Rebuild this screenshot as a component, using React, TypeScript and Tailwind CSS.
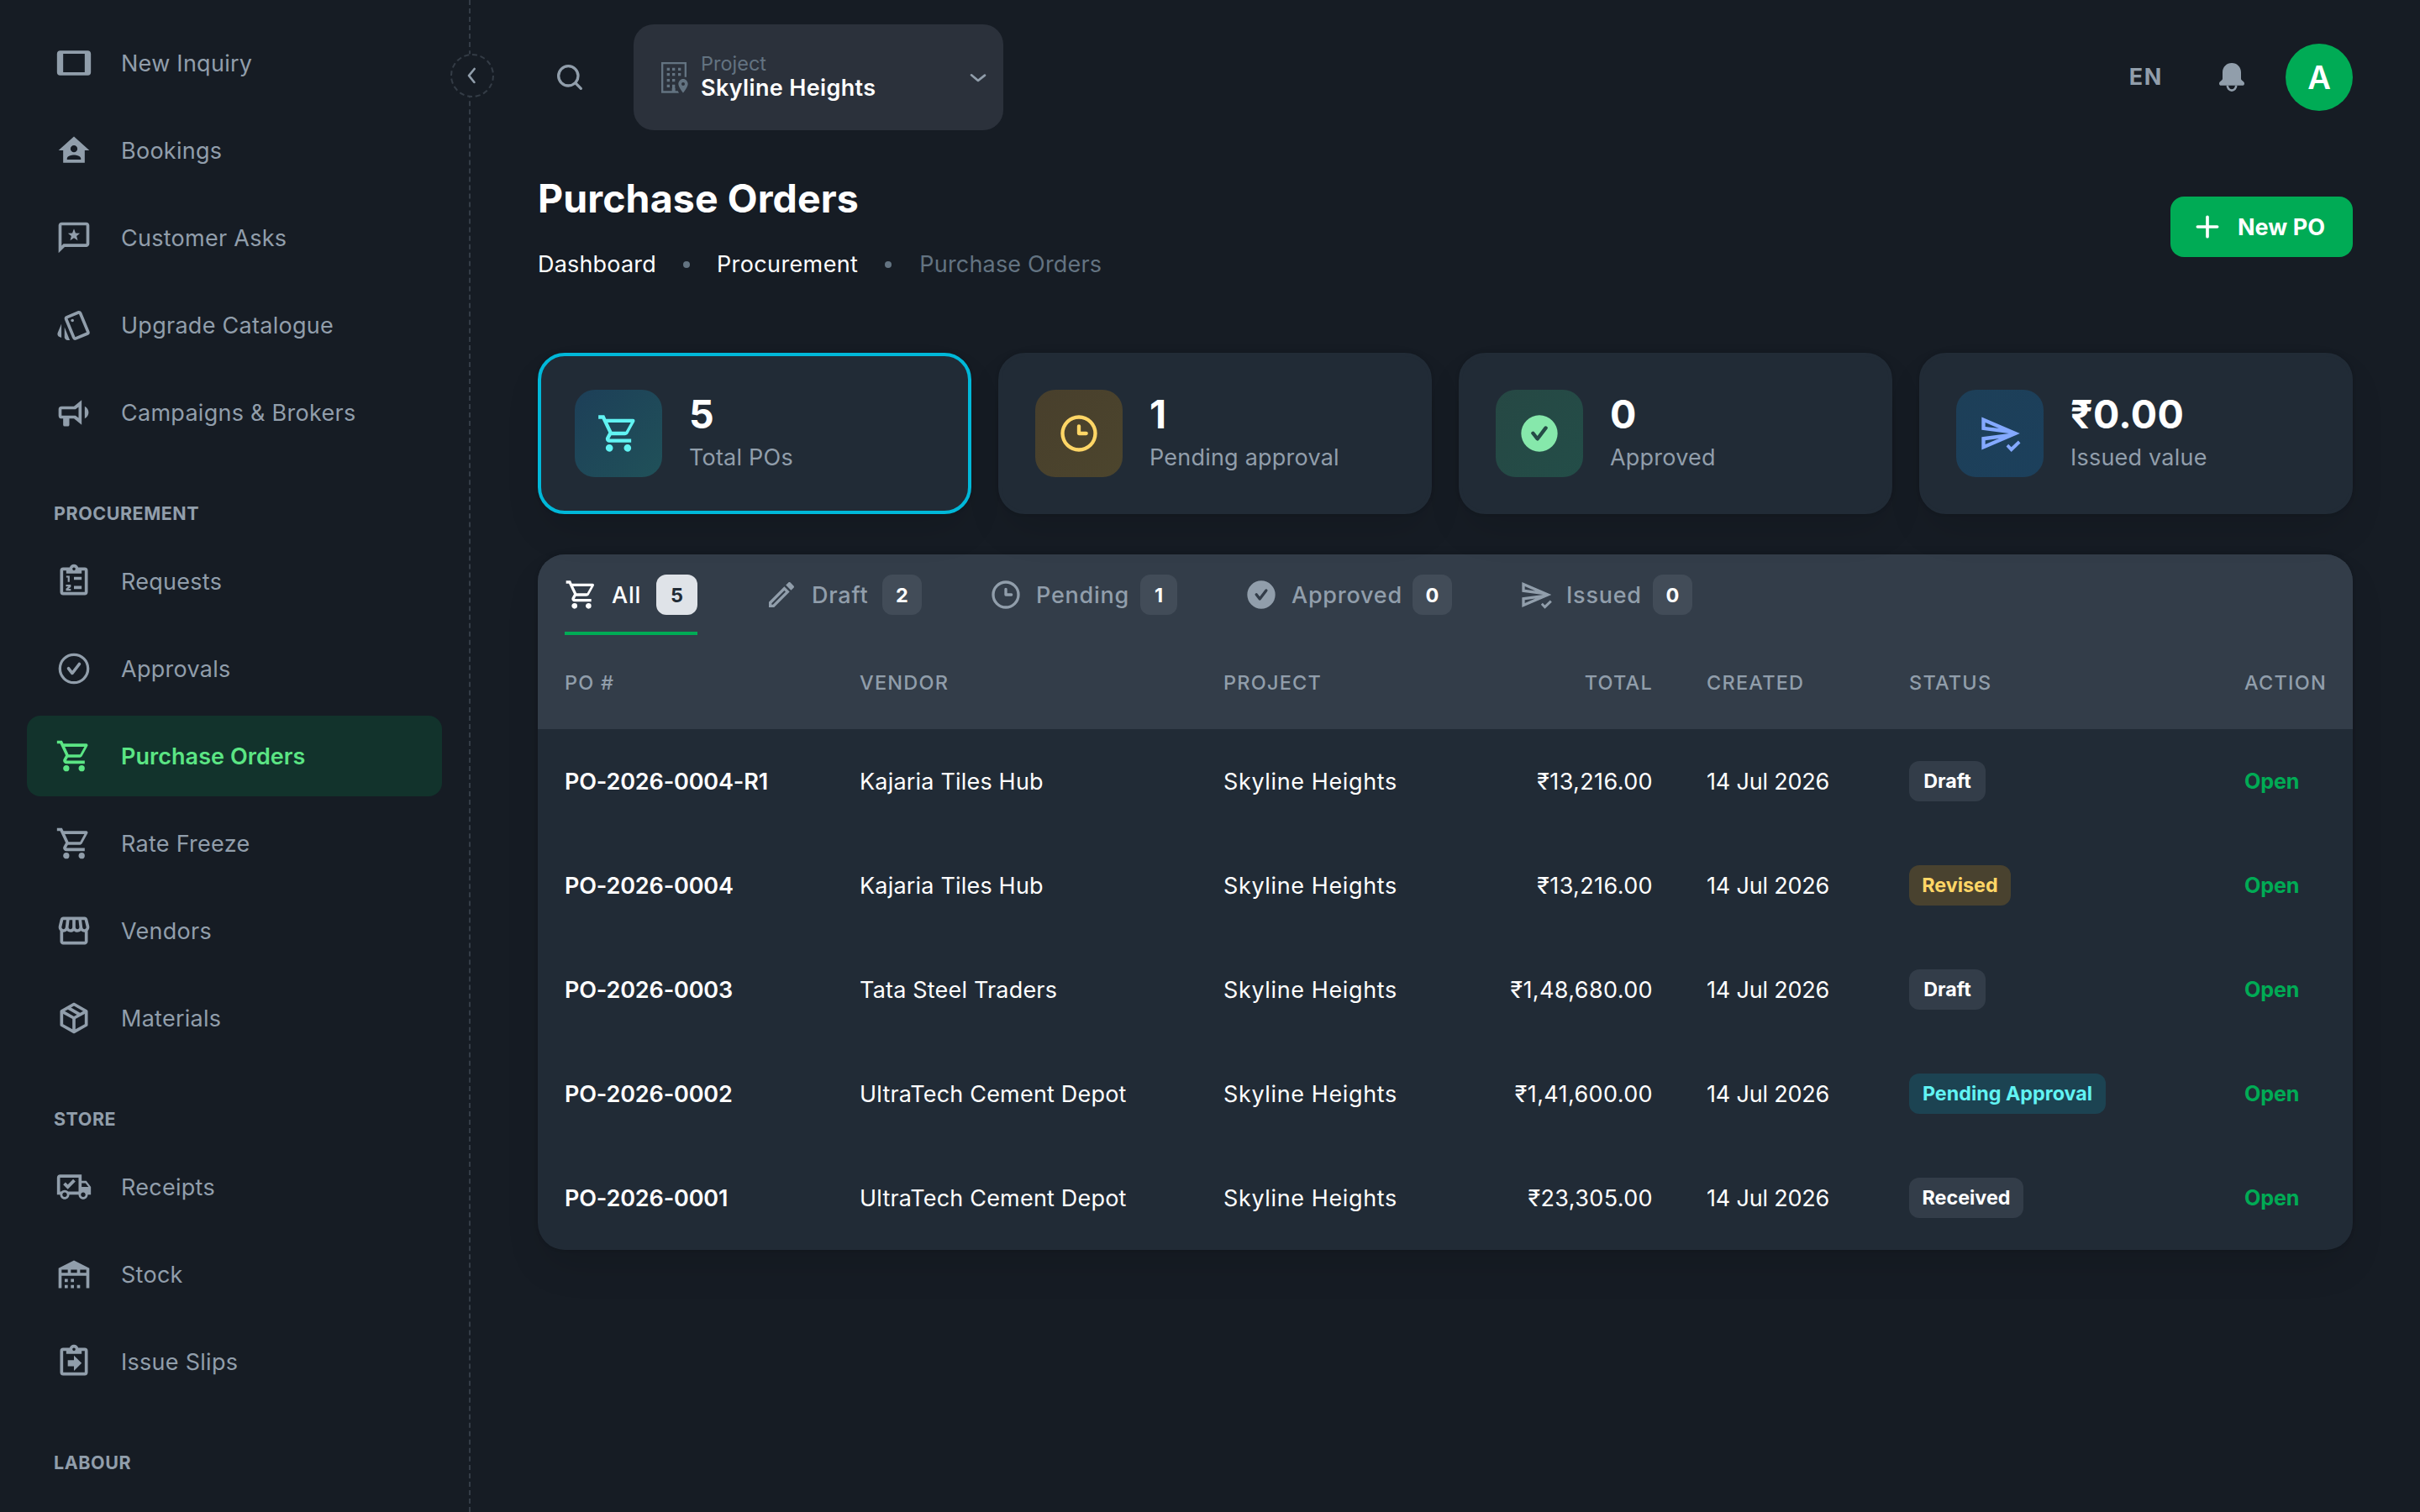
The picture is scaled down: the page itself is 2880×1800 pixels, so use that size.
import type { ReactNode } from "react";
import { MdOutlineStyle, MdOutlineStorefront } from "react-icons/md";

function Icon({ className = "", children }: { className?: string; children: ReactNode }) {
  return (
    <svg viewBox="0 0 24 24" fill="currentColor" aria-hidden="true" className={`shrink-0 ${className}`}>
      {children}
    </svg>
  );
}

const CLIPBOARD =
  "M19,3H14.82C14.4,1.84 13.3,1 12,1C10.7,1 9.6,1.84 9.18,3H5A2,2 0 0,0 3,5V19A2,2 0 0,0 5,21H19A2,2 0 0,0 21,19V5A2,2 0 0,0 19,3M12,3A1,1 0 0,1 13,4A1,1 0 0,1 12,5A1,1 0 0,1 11,4A1,1 0 0,1 12,3M7,7H17V5H19V19H5V5H7V7Z";

const paths = {
  tablet: "M19,18H5V6H19M21,4H3C1.89,4 1,4.89 1,6V18A2,2 0 0,0 3,20H21A2,2 0 0,0 23,18V6C23,4.89 22.1,4 21,4Z",
  home: "M12,3L2,12H5V20H19V12H22L12,3M12,8.75A2.25,2.25 0 0,1 14.25,11A2.25,2.25 0 0,1 12,13.25A2.25,2.25 0 0,1 9.75,11A2.25,2.25 0 0,1 12,8.75M12,15C13.5,15 16.5,15.75 16.5,17.25V18H7.5V17.25C7.5,15.75 10.5,15 12,15Z",
  messageStar:
    "M20 2H4C2.9 2 2 2.9 2 4V22L6 18H20C21.1 18 22 17.1 22 16V4C22 2.9 21.1 2 20 2M20 16H5.17L4 17.17V4H20V16M12 6.2L13.06 8.94L15.9 9.2L13.71 10.96L14.45 13.8L12 12.2L9.55 13.8L10.29 10.96L8.1 9.2L10.94 8.94Z",
  bullhorn:
    "M12,8H4A2,2 0 0,0 2,10V14A2,2 0 0,0 4,16H5V20A1,1 0 0,0 6,21H8A1,1 0 0,0 9,20V16H12L17,20V4L12,8M15,15.6L13,14H4V10H13L15,8.4V15.6M21.5,12C21.5,13.71 20.54,15.26 19,16V8C20.53,8.75 21.5,10.3 21.5,12Z",
  cart: "M17,18A2,2 0 0,1 19,20A2,2 0 0,1 17,22C15.89,22 15,21.1 15,20C15,18.89 15.89,18 17,18M1,2H4.27L5.21,4H20A1,1 0 0,1 21,5C21,5.17 20.95,5.34 20.88,5.5L17.3,11.97C16.96,12.58 16.3,13 15.55,13H8.1L7.2,14.63L7.17,14.75A0.25,0.25 0 0,0 7.42,15H19V17H7C5.89,17 5,16.1 5,15C5,14.65 5.09,14.32 5.24,14.04L6.6,11.59L3,4H1V2M7,18A2,2 0 0,1 9,20A2,2 0 0,1 7,22C5.89,22 5,21.1 5,20C5,18.89 5.89,18 7,18M16,11L18.78,6H6.14L8.5,11H16Z",
  box: "M21,16.5C21,16.88 20.79,17.21 20.47,17.38L12.57,21.82C12.41,21.94 12.21,22 12,22C11.79,22 11.59,21.94 11.43,21.82L3.53,17.38C3.21,17.21 3,16.88 3,16.5V7.5C3,7.12 3.21,6.79 3.53,6.62L11.43,2.18C11.59,2.06 11.79,2 12,2C12.21,2 12.41,2.06 12.57,2.18L20.47,6.62C20.79,6.79 21,7.12 21,7.5V16.5M12,4.15L10.11,5.22L16,8.61L17.96,7.5L12,4.15M6.04,7.5L12,10.85L13.96,9.75L8.08,6.35L6.04,7.5M5,15.91L11,19.29V12.58L5,9.21V15.91M19,15.91V9.21L13,12.58V19.29L19,15.91Z",
  truck:
    "M18 18.5C18.83 18.5 19.5 17.83 19.5 17C19.5 16.17 18.83 15.5 18 15.5C17.17 15.5 16.5 16.17 16.5 17C16.5 17.83 17.17 18.5 18 18.5M19.5 9.5H17V12H21.46L19.5 9.5M6 18.5C6.83 18.5 7.5 17.83 7.5 17C7.5 16.17 6.83 15.5 6 15.5C5.17 15.5 4.5 16.17 4.5 17C4.5 17.83 5.17 18.5 6 18.5M20 8L23 12V17H21C21 18.66 19.66 20 18 20C16.34 20 15 18.66 15 17H9C9 18.66 7.66 20 6 20C4.34 20 3 18.66 3 17H1V6C1 4.89 1.89 4 3 4H17V8H20M3 6V15H3.76C4.31 14.39 5.11 14 6 14C6.89 14 7.69 14.39 8.24 15H15V6H3M5 10.5L6.5 9L8 10.5L11.5 7L13 8.5L8 13.5L5 10.5Z",
  warehouse:
    "M6 19H8V21H6V19M12 3L2 8V21H4V13H20V21H22V8L12 3M8 11H4V9H8V11M14 11H10V9H14V11M20 11H16V9H20V11M6 15H8V17H6V15M10 15H12V17H10V15M10 19H12V21H10V19M14 19H16V21H14V19Z",
  clipboardArrow: CLIPBOARD + "M12 18V15H8V11H12V8L17 13L12 18Z",
  checkCircleOutline:
    "M12 2a10 10 0 1 0 10 10A10 10 0 0 0 12 2zm0 18.2a8.2 8.2 0 1 1 8.2-8.2 8.2 8.2 0 0 1-8.2 8.2zM14.7 8.39l-3.78 5-1.63-2.11a1 1 0 0 0-1.58 1.23l2.43 3.11a1 1 0 0 0 .79.38 1 1 0 0 0 .79-.39l4.57-6a1 1 0 1 0-1.6-1.22z",
  checkCircle:
    "M12 2a10 10 0 1 0 10 10A10 10 0 0 0 12 2zm4.3 7.61-4.57 6a1 1 0 0 1-.79.39 1 1 0 0 1-.79-.38l-2.44-3.11a1 1 0 0 1 1.58-1.23l1.63 2.08 3.78-5a1 1 0 1 1 1.6 1.22z",
  clock:
    "M12 2a10 10 0 1 0 10 10A10 10 0 0 0 12 2zm0 18a8 8 0 1 1 8-8 8 8 0 0 1-8 8zM16 11h-3V8a1 1 0 0 0-2 0v4a1 1 0 0 0 1 1h4a1 1 0 0 0 0-2z",
  pencil:
    "M14.06,9L15,9.94L5.92,19H5V18.08L14.06,9M17.66,3C17.41,3 17.15,3.1 16.96,3.29L15.13,5.12L18.88,8.87L20.71,7.04C21.1,6.65 21.1,6 20.71,5.63L18.37,3.29C18.17,3.09 17.92,3 17.66,3M14.06,6.19L3,17.25V21H6.75L17.81,9.94L14.06,6.19Z",
  send: "M4 6.03L11.5 9.25L4 8.25V6.03M11.5 14.75L4 17.97V15.75L11.5 14.75M2 3V10L17 12L2 14V21L23 12L2 3ZM18.3 22.1L15.5 19.1L16.7 17.9L18.3 19.5L22.1 15.9L23.3 17.3Z",
  search:
    "M20.71 19.29l-3.4-3.39A7.92 7.92 0 0 0 19 11a8 8 0 1 0-8 8 7.92 7.92 0 0 0 4.9-1.69l3.39 3.4a1 1 0 0 0 1.42 0 1 1 0 0 0 0-1.42zM5 11a6 6 0 1 1 6 6 6 6 0 0 1-6-6z",
  chevronLeft:
    "M13.83 19a1 1 0 0 1-.78-.37l-4.83-6a1 1 0 0 1 0-1.27l5-6a1 1 0 0 1 1.54 1.28L10.29 12l4.32 5.36a1 1 0 0 1-.78 1.64z",
  chevronDown:
    "M12 16a1 1 0 0 1-.64-.23l-6-5a1 1 0 1 1 1.28-1.54L12 13.71l5.36-4.32a1 1 0 0 1 1.41.15 1 1 0 0 1-.14 1.46l-6 4.83A1 1 0 0 1 12 16z",
};

type IconName = keyof typeof paths;

function Glyph({ name, className = "" }: { name: IconName; className?: string }) {
  return (
    <Icon className={className}>
      <path d={paths[name]} fillRule={name === "send" ? "evenodd" : "nonzero"} />
    </Icon>
  );
}

function NumberedClipboard() {
  return (
    <Icon className="size-11">
      <path d={CLIPBOARD} />
      <path d="M12 9.1H17V11H12ZM12 15H17V17H12Z" />
      <path d="M7 9H8.6V12.4M6.8 14.8H9.4V15.4L7.4 17V17.5H10" fill="none" stroke="currentColor" strokeWidth="1.2" />
    </Icon>
  );
}

function Building() {
  return (
    <svg viewBox="33 41 96 111" fill="currentColor" className="h-[37px] w-8 shrink-0" aria-hidden="true">
      <path d="M33 41H123V94H116V48H40V144H71V135H83V144H92L96 151H33Z" />
      <path d="M53 61h10v10h-10zM72 61h10v10h-10zM93 61h10v10h-10zM53 80h10v10h-10zM72 80h10v10h-10zM93 80h10v10h-10zM53 101h10v10h-10zM72 101h10v10h-10zM53 121h10v10h-10zM72 121h10v16h-10z" />
      <path
        fillRule="evenodd"
        d="M111 101C120 101 128 109 128 119C128 130 111 151 111 151C111 151 94 130 94 119C94 109 102 101 111 101ZM111 113A6 6 0 1 0 111 125A6 6 0 1 0 111 113Z"
      />
    </svg>
  );
}

function Bell() {
  return (
    <Icon className="size-12">
      <path d="M12 3.5C8.9 3.5 6.5 5.9 6.5 9V12.8C6.5 13.4 6.2 13.7 5.6 14.1C4.9 14.6 4.5 15.1 4.5 15.7C4.5 16.4 5 16.9 5.7 16.9H18.3C19 16.9 19.5 16.4 19.5 15.7C19.5 15.1 19.1 14.6 18.4 14.1C17.8 13.7 17.5 13.4 17.5 12.8V9C17.5 5.9 15.1 3.5 12 3.5Z" />
      <path d="M9.4 16.9A2.6 2.9 0 0 0 14.6 16.9" fill="none" stroke="currentColor" strokeWidth="1.3" />
    </Icon>
  );
}

type NavEntry = { label: string; icon: ReactNode; active?: boolean };

const sales: NavEntry[] = [
  { label: "New Inquiry", icon: <Glyph name="tablet" className="size-11" /> },
  { label: "Bookings", icon: <Glyph name="home" className="size-11" /> },
  { label: "Customer Asks", icon: <Glyph name="messageStar" className="size-11" /> },
  { label: "Upgrade Catalogue", icon: <MdOutlineStyle className="size-11" /> },
  { label: "Campaigns & Brokers", icon: <Glyph name="bullhorn" className="size-11" /> },
];
const procurement: NavEntry[] = [
  { label: "Requests", icon: <NumberedClipboard /> },
  { label: "Approvals", icon: <Glyph name="checkCircleOutline" className="size-11" /> },
  { label: "Purchase Orders", icon: <Glyph name="cart" className="size-11" />, active: true },
  { label: "Rate Freeze", icon: <Glyph name="cart" className="size-11" /> },
  { label: "Vendors", icon: <MdOutlineStorefront className="size-11" /> },
  { label: "Materials", icon: <Glyph name="box" className="size-11" /> },
];
const store: NavEntry[] = [
  { label: "Receipts", icon: <Glyph name="truck" className="size-11" /> },
  { label: "Stock", icon: <Glyph name="warehouse" className="size-11" /> },
  { label: "Issue Slips", icon: <Glyph name="clipboardArrow" className="size-11" /> },
];

function NavGroup({ title, items }: { title?: string; items: NavEntry[] }) {
  return (
    <div className="flex flex-col">
      {title && (
        <div className="h-[97px] pt-[46px] pl-8 text-[21.5px] leading-9 font-bold tracking-[0.025em] text-[#919eab] uppercase">
          {title}
        </div>
      )}
      {items.map((item) => (
        <div
          key={item.label}
          className={`mb-2 flex h-24 items-center rounded-2xl pl-8 ${
            item.active ? "bg-[#12332c] font-semibold text-[#5be584]" : "text-[#919eab]"
          }`}
        >
          <span className="flex w-12 justify-center">{item.icon}</span>
          <span className={`ml-8 pt-0.5 text-[27px] ${item.active ? "tracking-[0.002em]" : "tracking-[0.01em]"}`}>
            {item.label}
          </span>
        </div>
      ))}
    </div>
  );
}

function Sidebar() {
  return (
    <aside className="relative h-full w-[560px] shrink-0 border-r-2 border-dashed border-[#343c46]">
      <div className="h-full overflow-hidden pt-[27px] pr-8 pl-8">
        <NavGroup items={sales} />
        <NavGroup title="Procurement" items={procurement} />
        <NavGroup title="Store" items={store} />
        <NavGroup title="Labour" items={[]} />
      </div>
      <button className="absolute top-16 -right-[30px] flex size-[52px] items-center justify-center rounded-full border-2 border-dashed border-[#343c46] bg-[#161c24] text-[#919eab]">
        <Glyph name="chevronLeft" className="size-8" />
      </button>
    </aside>
  );
}

function Topbar() {
  return (
    <header className="flex h-[184px] items-center pr-20 pl-[98px] text-[#919eab]">
      <Glyph name="search" className="size-10" />
      <div className="ml-14 flex h-[126px] w-[440px] items-center rounded-3xl bg-[#2b313b] pr-[14px] pl-[33px]">
        <span className="text-[#637381]">
          <Building />
        </span>
        <div className="ml-[15px] flex-1 pb-[3px]">
          <div className="text-[23.5px] leading-[29px] text-[#637381]">Project</div>
          <div className="text-[27px] leading-[30px] font-semibold tracking-[0.013em] text-white">Skyline Heights</div>
        </div>
        <Glyph name="chevronDown" className="size-8" />
      </div>
      <div className="ml-auto flex items-center">
        <span className="text-[27px] font-bold tracking-[0.06em]">EN</span>
        <span className="ml-[58px]">
          <Bell />
        </span>
        <div className="ml-10 flex size-20 items-center justify-center rounded-full bg-[#00ab55] text-[38px] font-semibold text-white">
          A
        </div>
      </div>
    </header>
  );
}

function PageHead() {
  return (
    <div className="flex h-[236px] justify-between">
      <div className="pt-4">
        <h1 className="text-[46.5px] leading-[72px] font-bold tracking-[0.002em] text-white">Purchase Orders</h1>
        <nav className="mt-[21px] flex items-center text-[27px] leading-[44px] tracking-[0.007em] text-white">
          <span>Dashboard</span>
          <span className="mx-8 size-2 rounded-full bg-[#637381]" />
          <span className="tracking-[0.014em]">Procurement</span>
          <span className="mr-[33px] ml-8 size-2 rounded-full bg-[#637381]" />
          <span className="text-[#637381]">Purchase Orders</span>
        </nav>
      </div>
      <button className="mt-[50px] flex h-[72px] w-[217px] items-center rounded-2xl bg-[#00ab55] pl-6 text-[27px] font-bold text-white">
        <Icon className="size-10">
          <path d="M12 5V19M5 12H19" stroke="currentColor" strokeWidth="2.2" strokeLinecap="round" />
        </Icon>
        <span className="ml-4 pt-0.5">New PO</span>
      </button>
    </div>
  );
}

type Stat = { value: string; label: string; icon: IconName; tile: string; active?: boolean };

const stats: Stat[] = [
  { value: "5", label: "Total POs", icon: "cart", tile: "from-[#1d3f58] to-[#205159] text-[#61f3f3]", active: true },
  { value: "1", label: "Pending approval", icon: "clock", tile: "from-[#483f2c] to-[#4c452d] text-[#ffd666]" },
  { value: "0", label: "Approved", icon: "checkCircle", tile: "from-[#264844] to-[#234d48] text-[#86e8ab]" },
  { value: "₹0.00", label: "Issued value", icon: "send", tile: "from-[#1d3f58] to-[#1c405c] text-[#84a9ff]" },
];

const CARD_SHADOW = "shadow-[0_0_4px_rgba(0,0,0,0.16),0_24px_48px_-8px_rgba(0,0,0,0.12)]";

function Stats() {
  return (
    <div className="grid grid-cols-4 gap-8">
      {stats.map((s) => (
        <div
          key={s.label}
          className={`flex h-48 items-center rounded-[32px] border-4 bg-[#212b36] pl-10 ${CARD_SHADOW} ${
            s.active ? "border-[#00b8d9]" : "border-[#212b36]"
          }`}
        >
          <div className={`flex size-[104px] items-center justify-center rounded-3xl bg-linear-to-br ${s.tile}`}>
            <Glyph name={s.icon} className="size-[52px]" />
          </div>
          <div className="ml-8 pb-[3px]">
            <div className="text-[46.5px] leading-[60px] font-bold tracking-[0.008em] text-white">{s.value}</div>
            <div className="text-[27px] leading-[44px] tracking-[0.008em] text-[#919eab]">{s.label}</div>
          </div>
        </div>
      ))}
    </div>
  );
}

type Tab = { label: string; icon: IconName; count: number; width: string; badge: string; active?: boolean };

const tabs: Tab[] = [
  { label: "All", icon: "cart", count: 5, width: "w-[158px]", badge: "w-[49px]", active: true },
  { label: "Draft", icon: "pencil", count: 2, width: "w-[187px]", badge: "w-[47px]" },
  { label: "Pending", icon: "clock", count: 1, width: "w-[224px]", badge: "w-[44px]" },
  { label: "Approved", icon: "checkCircle", count: 0, width: "w-[247px]", badge: "w-[47px]" },
  { label: "Issued", icon: "send", count: 0, width: "w-[206px]", badge: "w-[47px]" },
];

function Tabs() {
  return (
    <div className="flex h-24 gap-20 bg-[#333d49] px-8">
      {tabs.map((t) => (
        <div
          key={t.label}
          className={`flex h-24 items-center border-y-4 border-t-transparent text-[27px] font-medium ${t.width} ${
            t.active ? "border-b-[#00ab55] text-white" : "border-b-transparent text-[#919eab]"
          }`}
        >
          <Glyph name={t.icon} className="size-10" />
          <span className="ml-4 pt-[3px] tracking-[0.028em]">{t.label}</span>
          <span
            className={`ml-auto flex h-12 items-center justify-center rounded-xl pt-px text-[23.5px] font-bold ${t.badge} ${
              t.active ? "bg-[#dfe3e8] text-[#212b36]" : "bg-[#424c58] text-white"
            }`}
          >
            {t.count}
          </span>
        </div>
      ))}
    </div>
  );
}

const COLUMNS = "grid grid-cols-[351px_433px_341px_234px_241px_399px_161px] items-center *:px-8";

type Order = { po: string; vendor: string; total: string; status: string; tone: string };

const neutral = "bg-[#333d49] text-white w-[91px]";
const orders: Order[] = [
  { po: "PO-2026-0004-R1", vendor: "Kajaria Tiles Hub", total: "₹13,216.00", status: "Draft", tone: neutral },
  {
    po: "PO-2026-0004",
    vendor: "Kajaria Tiles Hub",
    total: "₹13,216.00",
    status: "Revised",
    tone: "bg-[#49422f] text-[#ffd666] w-[121px]",
  },
  { po: "PO-2026-0003", vendor: "Tata Steel Traders", total: "₹1,48,680.00", status: "Draft", tone: neutral },
  {
    po: "PO-2026-0002",
    vendor: "UltraTech Cement Depot",
    total: "₹1,41,600.00",
    status: "Pending Approval",
    tone: "bg-[#1c4352] text-[#61f3f3] w-[234px]",
  },
  {
    po: "PO-2026-0001",
    vendor: "UltraTech Cement Depot",
    total: "₹23,305.00",
    status: "Received",
    tone: "bg-[#333d49] text-white w-[136px]",
  },
];

function OrdersTable() {
  return (
    <section className={`mt-12 overflow-hidden rounded-[32px] bg-[#212b36] ${CARD_SHADOW}`}>
      <Tabs />
      <div
        className={`${COLUMNS} h-28 bg-[#333d49] pt-0.5 text-[23.5px] font-medium tracking-[0.052em] text-[#919eab] uppercase`}
      >
        <div>PO #</div>
        <div>Vendor</div>
        <div>Project</div>
        <div className="text-right">Total</div>
        <div>Created</div>
        <div>Status</div>
        <div>Action</div>
      </div>
      {orders.map((o) => (
        <div key={o.po} className={`${COLUMNS} h-[124px] text-[27px] tracking-[0.007em] whitespace-nowrap text-white`}>
          <div className="pt-0.5 font-semibold tracking-[-0.006em]">{o.po}</div>
          <div className="pt-0.5">{o.vendor}</div>
          <div className="pt-0.5 tracking-[0.023em]">Skyline Heights</div>
          <div className="flex justify-end pt-0.5 tracking-[0.014em]">{o.total}</div>
          <div className="pt-0.5 tracking-[-0.007em]">14 Jul 2026</div>
          <div>
            <span
              className={`flex h-12 items-center justify-center rounded-xl pt-px text-[23.3px] font-bold tracking-normal ${o.tone}`}
            >
              {o.status}
            </span>
          </div>
          <div className="pt-0.5 text-[25.2px] font-bold tracking-[-0.008em] text-[#00ab55]">Open</div>
        </div>
      ))}
    </section>
  );
}

export default function App() {
  return (
    <div className="flex h-[1800px] w-[2880px] overflow-hidden bg-[#161c24] font-['Inter',sans-serif]">
      <Sidebar />
      <main className="min-w-0 flex-1">
        <Topbar />
        <div className="px-20">
          <PageHead />
          <Stats />
          <OrdersTable />
        </div>
      </main>
    </div>
  );
}
